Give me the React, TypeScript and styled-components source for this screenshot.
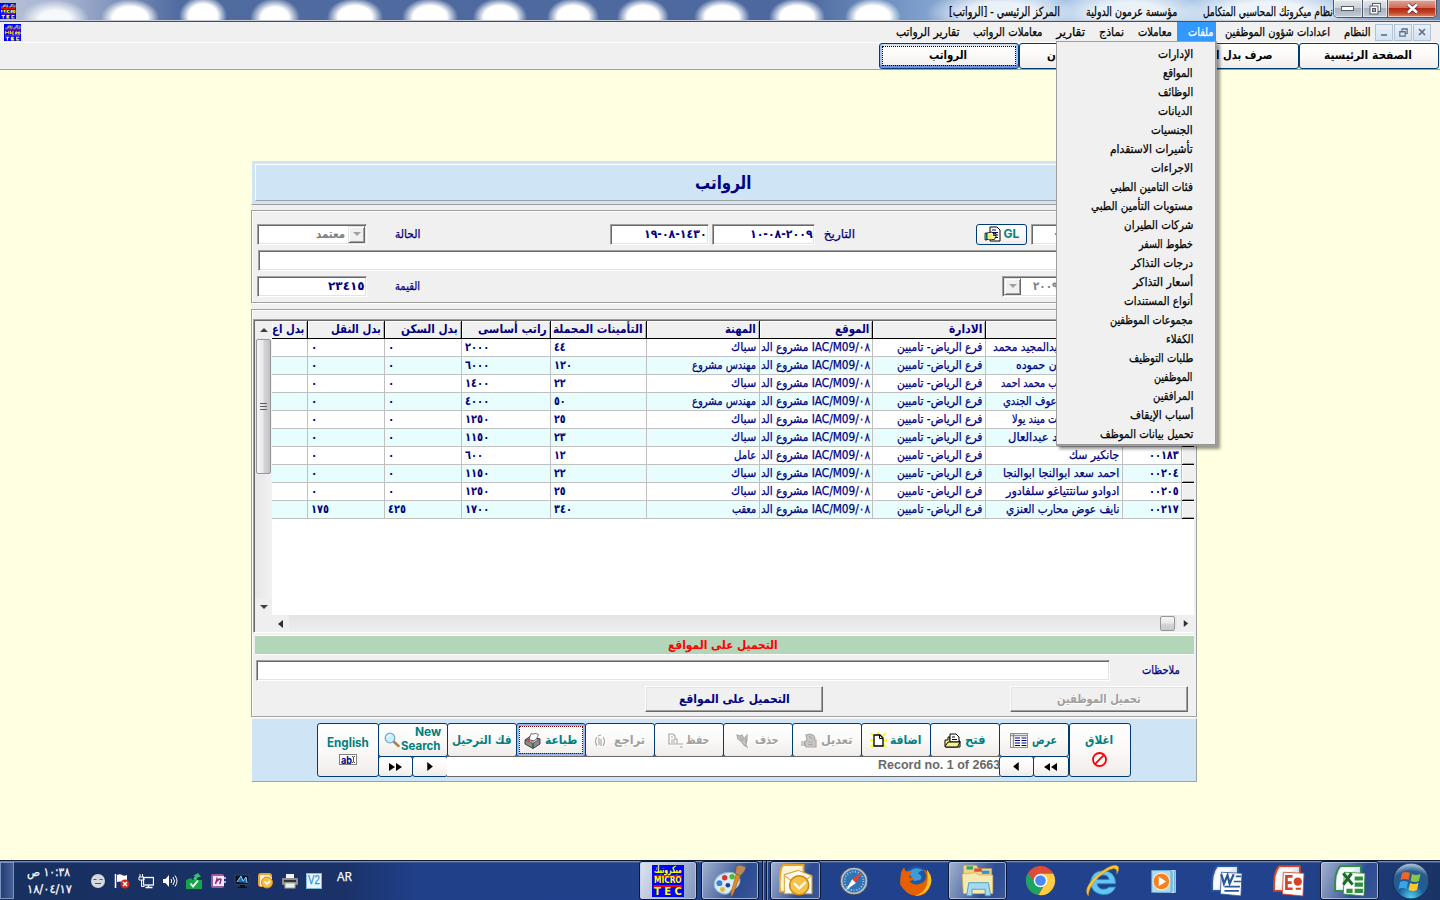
import React, { useLayoutEffect, useRef, useState } from "react";
import styled, { createGlobalStyle, css } from "styled-components";

const NAVY = "#000080";
const TEAL = "#008080";
const FACE = "#f0f0f0";

const Global = createGlobalStyle`
  * { box-sizing: border-box; }
  html, body { margin: 0; padding: 0; }
  body { width: 1440px; height: 900px; overflow: hidden; background: #ffffe1; font-family: "DejaVu Sans", "Liberation Sans", sans-serif; }
`;

/* ---------- text ---------- */

const LabelBox = styled.span<{ $w: number; $rtl: boolean }>`
  display: flex;
  flex: none;
  width: ${(p) => p.$w}px;
  direction: ${(p) => (p.$rtl ? "rtl" : "ltr")};
`;

const LabelInk = styled.span<{ $size: number; $bold?: boolean; $color: string; $rtl: boolean; $emboss?: boolean; $font?: string }>`
  flex: none;
  white-space: nowrap;
  line-height: 1.2;
  transform-origin: ${(p) => (p.$rtl ? "right" : "left")} center;
  font-size: ${(p) => p.$size}px;
  font-weight: ${(p) => (p.$bold ? 700 : 400)};
  color: ${(p) => p.$color};
  ${(p) => !p.$bold && css`-webkit-text-stroke: 0.25px ${p.$color};`}
  ${(p) => p.$font && css`font-family: ${p.$font};`}
  ${(p) => p.$emboss && css`text-shadow: 1px 1px 0 #fff;`}
`;

type LabelProps = {
  w: number;
  size?: number;
  bold?: boolean;
  color?: string;
  ltr?: boolean;
  emboss?: boolean;
  font?: string;
  children: React.ReactNode;
};

/* One line of text condensed or stretched to a fixed measure. */
function Label({ w, size = 12, bold, color = NAVY, ltr, emboss, font, children }: LabelProps) {
  const ref = useRef<HTMLSpanElement>(null);
  const [scale, setScale] = useState(1);
  useLayoutEffect(() => {
    if (ref.current && ref.current.offsetWidth) setScale(w / ref.current.offsetWidth);
  }, [w, children]);
  return (
    <LabelBox $w={w} $rtl={!ltr}>
      <LabelInk ref={ref} $size={size} $bold={bold} $color={color} $rtl={!ltr} $emboss={emboss} $font={font} style={{ transform: `scaleX(${scale})` }}>
        {children}
      </LabelInk>
    </LabelBox>
  );
}

const Visual = styled.bdo.attrs({ dir: "ltr" })``;
const Isolate = styled.bdi.attrs({ dir: "ltr" })``;

/* ---------- title bar ---------- */

const Screen = styled.div`
  width: 1440px;
  height: 900px;
  display: flex;
  flex-direction: column;
  position: relative;
  overflow: hidden;
`;

const TitleBar = styled.header`
  height: 22px;
  flex: none;
  display: flex;
  align-items: flex-start;
  border-bottom: 1px solid #4a4f5c;
  box-shadow: inset 0 -1px 0 #c5cbd6;
  background:
    radial-gradient(ellipse 34px 19px at 55px 19px, #f6f8fa 45%, transparent 100%),
    radial-gradient(ellipse 29px 19px at 130px 18px, #fff 60%, transparent 100%),
    radial-gradient(ellipse 24px 20px at 203px 16px, #fff 60%, transparent 100%),
    radial-gradient(ellipse 25px 20px at 275px 18px, #fff 55%, transparent 100%),
    radial-gradient(ellipse 28px 19px at 355px 17px, #fff 60%, transparent 100%),
    radial-gradient(ellipse 28px 19px at 430px 17px, #fff 60%, transparent 100%),
    radial-gradient(ellipse 27px 19px at 500px 17px, #fff 60%, transparent 100%),
    radial-gradient(ellipse 26px 19px at 573px 17px, #fff 60%, transparent 100%),
    radial-gradient(ellipse 26px 19px at 643px 17px, #fff 60%, transparent 100%),
    radial-gradient(ellipse 28px 19px at 722px 17px, #fff 60%, transparent 100%),
    radial-gradient(ellipse 28px 19px at 797px 17px, #fff 60%, transparent 100%),
    radial-gradient(ellipse 28px 19px at 873px 17px, #fff 60%, transparent 100%),
    radial-gradient(ellipse 75px 24px at 1000px 13px, rgba(255,255,255,.8) 45%, transparent 100%),
    radial-gradient(ellipse 75px 24px at 1130px 13px, rgba(255,255,255,.75) 45%, transparent 100%),
    radial-gradient(ellipse 90px 24px at 1268px 13px, rgba(255,255,255,.8) 45%, transparent 100%),
    linear-gradient(90deg, #b6bfd6 0, #a9b6d3 60px, #506b9f 180px, #4c689e 800px, #7d9fcc 920px, #a9c6e6 1050px, #a9c6e6 1330px, #6b84a8 1440px);
`;

const Brand16 = styled.div<{ $mt: number; $ml: number }>`
  margin: ${(p) => p.$mt}px 0 0 ${(p) => p.$ml}px;
  display: flex;
`;

const TitleTexts = styled.div`
  margin-left: auto;
  height: 22px;
  display: flex;
  align-items: center;
`;

const Space = styled.span<{ $w: number }>`
  flex: none;
  width: ${(p) => p.$w}px;
`;

const Filler = styled.span`
  flex: 1;
`;

const WindowButtons = styled.div`
  display: flex;
  height: 18px;
  width: 104px;
  margin: 0 3px 0 0;
  border: 1px solid #4d5566;
  border-top: 0;
  border-radius: 0 0 5px 5px;
  overflow: hidden;
`;

const WinButton = styled.div<{ $w: number; $close?: boolean }>`
  width: ${(p) => p.$w}px;
  height: 17px;
  display: flex;
  align-items: center;
  justify-content: center;
  border-right: ${(p) => (p.$close ? 0 : 1)}px solid #4d5566;
  box-shadow: inset 0 0 0 1px rgba(255,255,255,.55);
  background: ${(p) => (p.$close
    ? "linear-gradient(#e0a698 0, #cf6d5c 45%, #b5280f 50%, #c2452a 75%, #e38b6c)"
    : "linear-gradient(#e3e6ea 0, #ced4db 45%, #a9b2bd 50%, #c4ccd5)")};
`;

/* ---------- menu bar ---------- */

const MenuBar = styled.nav`
  height: 21px;
  flex: none;
  display: flex;
  align-items: center;
  background: ${FACE};
  border-bottom: 1px solid #fff;
`;

const MenuEntry = styled.div<{ $active?: boolean; $pl: number; $pr: number }>`
  height: 20px;
  display: flex;
  align-items: center;
  padding: 0 ${(p) => p.$pr}px 0 ${(p) => p.$pl}px;
  background: ${(p) => (p.$active ? "#3399ff" : "transparent")};
`;

const MenuEntries = styled.div`
  margin-left: auto;
  display: flex;
`;

const MdiButton = styled.div`
  width: 18px;
  height: 17px;
  margin-right: 1px;
  border: 1px solid #b2c3d6;
  background: linear-gradient(#e9f0f8, #d3e2f2);
  display: flex;
  align-items: center;
  justify-content: center;
`;

const Dropdown = styled.div`
  position: absolute;
  left: 1056px;
  top: 41px;
  width: 161px;
  height: 405px;
  z-index: 5;
  padding: 3px 23px 0 0;
  background: ${FACE};
  border: 1px solid #a0a0a0;
  box-shadow: inset -1px -1px 0 #979797, 3px 3px 3px rgba(0,0,0,.42);
`;

const DropItem = styled.div`
  height: 19px;
  display: flex;
  align-items: center;
  justify-content: flex-end;
`;

/* ---------- tab strip ---------- */

const TabStrip = styled.div`
  height: 27px;
  flex: none;
  display: flex;
  justify-content: flex-end;
  padding-right: 1px;
  background: ${FACE};
  border-bottom: 1px solid #a0a0a0;
`;

const xpButton = css`
  border: 1px solid #003c74;
  border-radius: 3px;
  background: linear-gradient(#ffffff, #fbfaf9 50%, #efebe8);
`;

const Tab = styled.div<{ $active?: boolean; $from?: number }>`
  ${xpButton}
  width: 140px;
  height: 26px;
  display: flex;
  align-items: center;
  justify-content: ${(p) => (p.$from ? "flex-start" : "center")};
  padding: 0 2px 0 ${(p) => p.$from ?? 0}px;
  ${(p) => p.$active && css`
    box-shadow: inset 0 -3px 0 #6f8fe6, inset 2px 0 0 #a9c1f2, inset -2px 0 0 #a9c1f2, inset 0 2px 0 #cfe0fb;
    outline: 1px dotted #000;
    outline-offset: -4px;
  `}
`;

/* ---------- form ---------- */

const Workspace = styled.main`
  flex: 1;
  padding: 91px 0 0 251px;
  background: #ffffe1;
`;

const Form = styled.section`
  width: 946px;
  display: flex;
  flex-direction: column;
`;

const FormHeader = styled.div`
  height: 44px;
  padding: 3px 3px 2px 3px;
  background: #cfe4f5;
  border-bottom: 1px solid #a0a0a0;
  border-left: 1px solid #ffffe1;
`;

const FormTitle = styled.div`
  height: 37px;
  display: flex;
  align-items: center;
  justify-content: center;
  padding-right: 2px;
  border: 1px solid #fff;
  border-right-color: #a0a0a0;
  border-bottom-color: #a0a0a0;
`;

const FormBody = styled.div`
  height: 513px;
  padding-top: 5px;
  background: ${FACE};
`;

const Panel = styled.div<{ $h: number }>`
  height: ${(p) => p.$h}px;
  margin-bottom: 6px;
  border: 1px solid #a0a0a0;
  box-shadow: inset 1px 1px 0 #fff, 0 1px 0 #fff;
`;

const FieldRow = styled.div<{ $pt: number }>`
  display: flex;
  align-items: center;
  height: ${(p) => 22 + p.$pt}px;
  padding: ${(p) => p.$pt}px 0 0 5px;
`;

const Field = styled.div<{ $w: number; $pl?: boolean }>`
  width: ${(p) => p.$w}px;
  height: 21px;
  flex: none;
  display: flex;
  align-items: center;
  justify-content: ${(p) => (p.$pl ? "flex-start" : "flex-end")};
  padding: 0 1px;
  background: #fff;
  border: 1px solid;
  border-color: #a0a0a0 #fff #fff #a0a0a0;
  box-shadow: inset 1px 1px 0 #696969, inset -1px -1px 0 #e3e3e3;
`;

const ComboArrow = styled.div`
  width: 17px;
  height: 17px;
  flex: none;
  display: flex;
  align-items: center;
  justify-content: center;
  background: ${FACE};
  border: 1px solid;
  border-color: #e3e3e3 #696969 #696969 #e3e3e3;
  box-shadow: inset 1px 1px 0 #fff, inset -1px -1px 0 #a0a0a0;
`;

const GlButton = styled.div`
  ${xpButton}
  width: 51px;
  height: 21px;
  display: flex;
  align-items: center;
  justify-content: center;
  gap: 3px;
`;

/* ---------- grid ---------- */

const ListBox = styled.div`
  height: 314px;
  margin: 9px 2px 0 1px;
  display: flex;
  background: #fff;
  border: 1px solid #a0a0a0;
  border-right: 0;
  border-bottom: 1px solid #fff;
  box-shadow: inset 1px 1px 0 #696969;
  padding: 1px 0 0 1px;
`;

const VScroll = styled.div`
  width: 17px;
  display: flex;
  flex-direction: column;
  align-items: center;
  background: linear-gradient(90deg, #e6e6e6, #f2f2f2);
`;

const VThumb = styled.div`
  width: 15px;
  height: 135px;
  margin-top: 1px;
  display: flex;
  align-items: center;
  justify-content: center;
  border: 1px solid #979797;
  border-radius: 2px;
  background: linear-gradient(90deg, #f5f5f5, #e8e8eb 48%, #d6d6da 52%, #c0c0c6);
`;

const ScrollEnd = styled.div`
  width: 17px;
  height: 17px;
  flex: none;
  display: flex;
  align-items: center;
  justify-content: center;
  background: #efefef;
`;

const GridSide = styled.div`
  width: 923px;
  display: flex;
  flex-direction: column;
`;

const GridArea = styled.div`
  flex: 1;
  background: #fff;
`;

const columns = "36px 77px 77px 89px 96px 113px 113px 113px 137px 59px 12px";

const HeadRow = styled.div`
  display: grid;
  grid-template-columns: ${columns};
  height: 18px;
  background: ${FACE};
  border-bottom: 1px solid #000;
`;

const HeadCell = styled.div`
  display: flex;
  align-items: center;
  justify-content: flex-end;
  overflow: hidden;
  padding-right: 3px;
  border-right: 1px solid #000;
  box-shadow: inset 1px 1px 0 #fff, inset -1px 0 0 #b5b5b5;
`;

const DataRow = styled.div<{ $alt: boolean }>`
  display: grid;
  grid-template-columns: ${columns};
  height: 18px;
  background: ${(p) => (p.$alt ? "#e8fefe" : "#fff")};
`;

const Cell = styled.div<{ $num?: boolean; $pr?: number }>`
  display: flex;
  align-items: center;
  justify-content: ${(p) => (p.$num ? "flex-start" : "flex-end")};
  overflow: hidden;
  padding: 0 ${(p) => p.$pr ?? 2}px 0 ${(p) => (p.$num ? 3 : 0)}px;
  border-right: 1px solid #c0c0c0;
  border-bottom: 1px solid #c0c0c0;
`;

const Selector = styled.div`
  background: ${FACE};
  border-bottom: 1px solid #000;
  box-shadow: inset 1px 1px 0 #fff, inset 0 -1px 0 #a0a0a0;
`;

const HScroll = styled.div`
  height: 17px;
  display: flex;
  align-items: center;
  background: linear-gradient(#e4e4e4, #eeeeee);
`;

const HThumb = styled.div`
  width: 15px;
  height: 15px;
  margin: 0 2px 0 auto;
  border: 1px solid #979797;
  border-radius: 2px;
  background: linear-gradient(#f5f5f5, #e9e9ea 48%, #d6d6da 52%, #cacace);
`;

const GreenStrip = styled.div`
  height: 20px;
  margin: 2px 2px 0 3px;
  padding-right: 3px;
  border-top: 1px solid #fff;
  border-bottom: 1px solid #fff;
  background: #b3d5b8;
  display: flex;
  align-items: center;
  justify-content: center;
`;

const RemarksRow = styled.div`
  height: 31px;
  display: flex;
  align-items: center;
  padding: 0 0 1px 4px;
`;

const ActionRow = styled.div`
  height: 26px;
  display: flex;
  justify-content: flex-end;
  gap: 187px;
  padding-right: 8px;
`;

const RaisedButton = styled.div`
  width: 178px;
  height: 26px;
  display: flex;
  align-items: center;
  justify-content: center;
  background: ${FACE};
  border: 1px solid;
  border-color: #fff #696969 #696969 #fff;
  box-shadow: inset -1px -1px 0 #a0a0a0, inset 1px 1px 0 #e3e3e3;
`;

/* ---------- footer tool bar ---------- */

const Footer = styled.footer`
  height: 64px;
  display: flex;
  padding: 4px 0 0 65px;
  margin-left: 1px;
  background: #cfe4f5;
  border-top: 1px solid ${FACE};
  border-right: 1px solid #a0a0a0;
  border-bottom: 1px solid #a0a0a0;
`;

const ToolMid = styled.div`
  width: 691px;
  margin-left: -1px;
  display: flex;
  flex-direction: column;
`;

const ToolLine = styled.div`
  display: flex;
  & + & { margin-top: -1px; }
  & > * + * { margin-left: -1px; }
`;

const ToolButton = styled.div<{ $w: number; $h: number; $column?: boolean; $focus?: boolean; $gap?: number }>`
  ${xpButton}
  width: ${(p) => p.$w}px;
  height: ${(p) => p.$h}px;
  flex: none;
  display: flex;
  flex-direction: ${(p) => (p.$column ? "column" : "row")};
  align-items: center;
  justify-content: center;
  gap: ${(p) => p.$gap ?? 4}px;
  padding-right: 1px;
  ${(p) => p.$focus && css`
    box-shadow: inset 0 0 0 2px #9db6ee, inset 0 -3px 0 #6f8fe6;
    outline: 1px dotted #800000;
    outline-offset: -4px;
  `}
`;

const TwoLines = styled.div`
  display: flex;
  flex-direction: column;
  align-items: flex-end;
`;

const RecordBox = styled.div`
  flex: 1;
  height: 21px;
  display: flex;
  align-items: flex-start;
  justify-content: flex-end;
  padding-top: 1px;
  background: #fff;
  border-top: 1px solid #696969;
  border-bottom: 1px solid #696969;
`;

/* ---------- task bar ---------- */

const Taskbar = styled.div`
  height: 40px;
  flex: none;
  display: flex;
  align-items: stretch;
  border-top: 1px solid #101b35;
  box-shadow: inset 0 1px 0 #7488b4, inset 0 2px 0 #3d5690;
  background: linear-gradient(90deg, #17305f 0, #1a3268 24%, #20408a 29%, #21428c 90%, #1a3366 100%);
`;

const ShowDesktop = styled.div`
  width: 14px;
  margin: 1px 0 1px 0;
  border: 1px solid #7e94c0;
  background: linear-gradient(90deg, #223c73, #486197);
`;

const Clock = styled.div`
  width: 60px;
  margin: 5px 0 0 13px;
  display: flex;
  flex-direction: column;
  gap: 3px;
`;

const Tray = styled.div`
  display: flex;
  align-items: center;
  width: 242px;
  gap: 8px;
  padding-left: 3px;
`;

const LanguageTag = styled.div`
  padding: 9px 0 0 8px;
  width: 310px;
`;

const TaskCell = styled.div<{ $w: number; $frame?: boolean; $lit?: boolean; $mr?: number }>`
  width: ${(p) => p.$w}px;
  height: 39px;
  margin-right: ${(p) => p.$mr ?? 0}px;
  flex: none;
  display: flex;
  align-items: center;
  justify-content: center;
  ${(p) => p.$frame && css`
    border: 1px solid #0c1834;
    border-radius: 3px;
    box-shadow: inset 0 0 0 1px rgba(190, 205, 235, .75);
    background: ${p.$lit
      ? "linear-gradient(115deg, #dfe4ee 0, #b4c0d8 45%, #8095c0 100%)"
      : "linear-gradient(115deg, #a3b2d1 0, #6078ab 40%, #2c4b91 65%, #3a5798 100%)"};
  `}
`;

const StackEdge = styled.div`
  width: 4px;
  height: 39px;
  border-left: 1px solid #0c1834;
  box-shadow: inset 1px 0 0 #7d92c0;
`;

/* ---------- drawings ---------- */

const BrandIcon = ({ s }: { s: number }) => (
  <svg width={s} height={s} viewBox="0 0 32 32">
    <rect width="32" height="32" fill="#0000ff" />
    <path d="M2 8h5V4M9 8V4h3v4h3V3M17 8h4V5M23 8V3h3v5h4V3" stroke="#a8a870" strokeWidth="2.200" fill="none" />
    <rect x="2" y="10" width="28" height="2" fill="#f00" />
    <path d="M3 19v-5l3 3 3-3v5M12 13v6M19 15h-4v4h4M22 20v-5h3v2h-3l3 3M27 15h3v4h-3z" stroke="#ffff00" strokeWidth="1.800" fill="none" />
    <rect x="2" y="20.500" width="28" height="2" fill="#f00" />
    <path d="M3 25h7M6.500 25v6M19 25h-5v5h5M14 27.500h4M29 25h-5v5h5" stroke="#ffff00" strokeWidth="2.200" fill="none" />
  </svg>
);

const BigBrand = styled.div`
  width: 32px;
  height: 32px;
  display: flex;
  flex-direction: column;
  align-items: center;
  justify-content: space-between;
  background: #0000ff;
  overflow: hidden;
`;

const BrandWord = styled.div<{ $lines?: boolean }>`
  height: ${(p) => (p.$lines ? 12 : 10)}px;
  display: flex;
  align-items: center;
  ${(p) => p.$lines && css`
    border-top: 2px solid #f00;
    border-bottom: 2px solid #f00;
  `}
`;

const Triangle = ({ dir, c = "#000", s = 8 }: { dir: "l" | "r" | "u" | "d"; c?: string; s?: number }) => {
  const d = { l: "M6 0v8L1 4z", r: "M2 0v8l5-4z", u: "M0 6h8L4 2z", d: "M0 2h8L4 6z" }[dir];
  return (
    <svg width={s} height={s} viewBox="0 0 8 8">
      <path d={d} fill={c} />
    </svg>
  );
};

const Double = ({ dir }: { dir: "l" | "r" }) => (
  <svg width="13" height="8" viewBox="0 0 13 8">
    <path d={dir === "r" ? "M0 0v8l6-4zM7 0v8l6-4z" : "M6 0v8L0 4zM13 0v8L7 4z"} fill="#000" />
  </svg>
);

const LedgerIcon = () => (
  <svg width="17" height="17" viewBox="0 0 17 17">
    <path d="M6 1h7l3 3v11H6z" fill="#fff" stroke="#000" />
    <path d="M8 4h4M8 6.500h6M8 9h6M8 11.500h6" stroke="#000080" />
    <path d="M1 7h2v7H1z" fill="#0ff" stroke="#000" strokeWidth=".7" />
    <path d="M3 7l5-1 1 1.500h3v1.500H9l3 .5v1.500l-1 .5v1.500l-1 .5H3z" fill="#ffffc0" stroke="#000" strokeWidth=".8" />
    <path d="M4 9h4M4 11h5M4 13h4" stroke="#e0d000" strokeWidth=".8" />
  </svg>
);

const MagnifierIcon = () => (
  <svg width="16" height="16" viewBox="0 0 16 16">
    <path d="M9 9l5.500 5" stroke="#b97a45" strokeWidth="2.500" strokeLinecap="round" />
    <circle cx="6" cy="6" r="4.800" fill="#c8f0fb" stroke="#74a9d2" strokeWidth="1.300" />
    <path d="M3.500 5.500C4 4 5 3.200 6.500 3.200" stroke="#fff" strokeWidth="1.200" fill="none" />
  </svg>
);

const PrinterIcon = () => (
  <svg width="17" height="17" viewBox="0 0 17 17">
    <path d="M1 8l5-3.500 10 2.500v5l-7 4.500-8-4.500z" fill="#8c8c8c" stroke="#333" strokeWidth=".9" />
    <path d="M5 8l2-6.500 2 .8 2-1 3.500 1.200-3 7z" fill="#fff" stroke="#555" strokeWidth=".8" />
    <path d="M1 8l8 3.500 7-4.500-4 0-2 2-5-1.500z" fill="#c4c4c4" stroke="#333" strokeWidth=".6" />
    <path d="M9 11.500V16" stroke="#333" />
    <path d="M4 8.300l2 .8" stroke="#f33" strokeWidth="1.300" />
    <path d="M7 9.500l1.500.5" stroke="#0d0" strokeWidth="1.500" />
  </svg>
);

const ViewIcon = () => (
  <svg width="18" height="15" viewBox="0 0 18 15">
    <rect x=".5" y=".5" width="17" height="14" fill="#fff" stroke="#909090" />
    <path d="M1 2.500h16M3.500 1v13" stroke="#909090" strokeWidth="1.500" />
    <path d="M5 5h5M5 7.500h5M5 10h5M5 12.500h5M11.500 5h5M11.500 7.500h5M11.500 10h5M11.500 12.500h5" stroke="#000080" strokeWidth="1.200" />
  </svg>
);

const OpenIcon = () => (
  <svg width="17" height="15" viewBox="0 0 17 15">
    <path d="M1 13V7h3V4h2v4h10v6H2z" fill="#ffff99" stroke="#000" />
    <path d="M6 9V1h6l3 3v5z" fill="#fff" stroke="#000" />
    <path d="M8 4h3M8 6.500h5" stroke="#000" />
    <path d="M1 13.500l3-4.500h12l-2.500 5H1z" fill="#f6f08a" stroke="#000" />
  </svg>
);

const NewIcon = () => (
  <svg width="17" height="16" viewBox="0 0 17 16">
    <path d="M1 1l15 14M16 1L1 15M8 0v4M0 8h17" stroke="#ffff00" strokeWidth="1.800" />
    <path d="M4 3h6l3 3v8H4z" fill="#fff" stroke="#000" strokeWidth="1.300" />
    <path d="M9.500 3v3.500H13" fill="none" stroke="#000" />
  </svg>
);

const GhostIcon = ({ kind }: { kind: "edit" | "erase" | "save" | "undo" }) => {
  const shapes = {
    edit: "M5 2l3-1 4 1 2 3-1 2h2v7H5l-1-2V9l2-2zM1 8v5M3 8v5M7 9h5M7 11.500h5M8 3l3 3",
    erase: "M1 2l3 1 2-1 2 4 3-4v5l-1 5 1 2-3-2-3-4-3-2zM4 4l3 4M9 9l2-4",
    save: "M1 1h4l2 2v3h2v5H1zM3 4h2M3 7h4M3 9h4M10 11h5M12 14h3",
    undo: "M3 4Q0 8 3 13M5 5v7M7 6v7M9 4Q12 8 9 13M4 3l3-1",
  };
  return (
    <svg width="16" height="15" viewBox="0 0 16 15">
      <path d={shapes[kind]} transform="translate(1 1)" stroke="#fff" fill="none" strokeWidth="1.200" />
      <path d={shapes[kind]} stroke="#a8a8a8" fill={kind === "undo" || kind === "save" ? "none" : "#c8c8c8"} strokeWidth="1.200" />
    </svg>
  );
};

const StopIcon = () => (
  <svg width="15" height="15" viewBox="0 0 15 15">
    <circle cx="7.500" cy="7.500" r="6.500" fill="#fff" stroke="#f00" strokeWidth="1.800" />
    <path d="M3.200 11.800l8.600-8.600" stroke="#f00" strokeWidth="1.800" />
  </svg>
);

const TextEntry = styled.div`
  width: 18px;
  height: 11px;
  display: flex;
  align-items: center;
  justify-content: space-between;
  padding: 0 1px;
  background: #fff;
  border: 1px solid #808080;
`;

const Caret = () => (
  <svg width="4" height="9" viewBox="0 0 4 9">
    <path d="M0 .5h1.500M2.500 .5H4M2 1v7M0 8.500h1.500M2.500 8.500H4" stroke="#000" strokeWidth=".9" />
  </svg>
);

/* tray */
const TrayGlyph = styled.svg.attrs({ width: 16, height: 16, viewBox: "0 0 16 16" })`
  flex: none;
`;

const trayIcons = [
  <><circle cx="8" cy="8" r="7" fill="#d5d8de" /><path d="M3.500 6.500h3M9.500 6.500h3M5 10.500h6" stroke="#555" /></>,
  <><path d="M1.500 1v14" stroke="#fff" strokeWidth="1.500" /><path d="M3 2q3-1.500 5 0t5 0v7q-3 1-5 0t-5 0z" fill="#fff" /><circle cx="11" cy="11" r="4.500" fill="#d5281c" /><path d="M9 9l4 4M13 9l-4 4" stroke="#fff" strokeWidth="1.500" /></>,
  <><rect x="5.500" y="4.500" width="10" height="7.500" fill="#1a3268" stroke="#fff" strokeWidth="1.300" /><path d="M10.500 12v2.500M7.500 14.500h7" stroke="#fff" strokeWidth="1.300" /><path d="M2 1v3M4.500 1v3M1 4h5v3H1zM3.500 7v6.500h3" stroke="#fff" fill="none" /></>,
  <><path d="M1 6h2.500L7 2v12L3.500 10H1z" fill="#fff" /><path d="M9 6q1.500 2 0 4M11 4q3 4 0 8M13 2.500q4 5.500 0 11" stroke="#fff" fill="none" /></>,
  <><path d="M0 7l5-2 2 2h9v9H0z" fill="#18a34a" /><path d="M7 6l2-3H7l5-3 3 4h-3l-2 4z" fill="#35c56a" /><path d="M4.500 10.500l2.500 3 5-6" stroke="#fff" strokeWidth="1.800" fill="none" /></>,
  <><rect x="1" y="1" width="13" height="14" rx="2" fill="#a05aa5" /><rect x="3" y="3" width="11" height="10" fill="#f6e8f7" /><path d="M5.500 11l1.500-5 .5 1.500Q10 5 11 6.500L9.800 11" stroke="#7c2a82" strokeWidth="1.500" fill="none" /><path d="M14 4h2v2h-2M14 8h2v2h-2" fill="#c9a0cc" /></>,
  <><rect x="1" y="2" width="14" height="9.500" fill="#0a1120" stroke="#38445c" /><path d="M3 9l4-6 2 5 3-4 1 6" stroke="#8fd0ff" fill="#1c6bb0" /><path d="M6 12v2H4v1h9v-1h-2v-2z" fill="#111" /></>,
  <><rect x="0" y="0" width="14" height="14" rx="3" fill="#f0a22e" /><path d="M2 2h9l3 3v8H2z" fill="#fff3d0" /><circle cx="9" cy="9.500" r="5.500" fill="#f3c050" stroke="#d98a12" /><path d="M6.500 8.500l2.500 2.500 3-3" stroke="#fff" strokeWidth="1.600" fill="none" /></>,
  <><rect x="4" y="1" width="8" height="5" fill="#f4f4f4" /><rect x="0" y="5" width="16" height="7" rx="1" fill="#8d9093" /><rect x="2" y="7" width="12" height="2" fill="#333" /><rect x="3" y="10" width="10" height="5" fill="#e9f1e7" stroke="#9a9" /></>,
];

const VBadge = styled.div`
  width: 16px;
  height: 16px;
  flex: none;
  display: flex;
  align-items: center;
  justify-content: center;
  background: #e9f5fb;
  border: 1px solid #7dbbe0;
`;

/* task bar applications */
const App32 = ({ children, s = 34 }: { children: React.ReactNode; s?: number }) => (
  <svg width={s} height={s} viewBox="0 0 32 32">{children}</svg>
);

const Paint = () => (
  <App32>
    <path d="M1 20C1 12 9 7 17 8s10 7 7 12-6 2-8 6-13 3-15-6z" fill="#d8ecf7" stroke="#8fb3ca" />
    <circle cx="6" cy="18" r="2.800" fill="#3b7edb" /><circle cx="11" cy="13" r="2.600" fill="#d13b2c" /><circle cx="18" cy="12" r="2.600" fill="#58b33b" /><circle cx="9" cy="24" r="2.300" fill="#e9b429" /><circle cx="14" cy="20" r="2.200" fill="#20408a" />
    <path d="M26 10L19 28l-2 3v-4l5-18z" fill="#e08a2c" stroke="#a65d14" strokeWidth=".6" />
    <path d="M21 9l1-7 4-1 5 2-1 3-4 5z" fill="#b98a5c" stroke="#7a5228" strokeWidth=".6" />
  </App32>
);
const Outlook = () => (
  <App32>
    <path d="M4 1h19v25H1q-1-12 1-22z" fill="#fff4d6" stroke="#eaa422" strokeWidth="1.800" />
    <path d="M5 10l13-4 13 5v17H5z" fill="#fffaf0" stroke="#d8a548" />
    <path d="M5 11l13 9 13-9" fill="none" stroke="#d8a548" />
    <circle cx="19" cy="20" r="9" fill="#f7c14a" stroke="#c98a14" strokeWidth="1.500" />
    <path d="M14 18l5 5 6-6" fill="none" stroke="#fffbe6" strokeWidth="2.200" />
  </App32>
);
const Safari = () => (
  <App32 s={30}>
    <circle cx="16" cy="16" r="13.500" fill="#2f74b4" stroke="#b8bec5" strokeWidth="2.600" />
    <circle cx="16" cy="16" r="14.800" fill="none" stroke="#3c434b" />
    <circle cx="16" cy="16" r="10" fill="none" stroke="#a9d6f4" strokeDasharray="1 2" strokeWidth="2" />
    <path d="M25 6l-7 12-4-4z" fill="#e8402e" /><path d="M7 26l7-12 4 4z" fill="#fff" />
  </App32>
);
const Firefox = () => (
  <App32>
    <circle cx="16" cy="15" r="13" fill="#20559f" />
    <path d="M9 8q6-7 14-2-4 0-5 3 5 2 2 6l-6 1z" fill="#3f9bd8" />
    <path d="M2 8q1-3 3-5 0 3 2 4 4-1 5 1-3 2-2 5 2 0 4 0-1 3-4 3 3 4 8 3 7-1 8-8-1-3-3-6 9 5 7 14-3 11-13 11T1 19q0-6 1-11z" fill="#e66000" />
    <path d="M26 5q7 8 3 16-4 9-14 9 9-3 11-10 2-8 0-15z" fill="#ffbf2b" />
  </App32>
);
const Explorer = () => (
  <App32 s={35}>
    <path d="M3 5V2h12l2 3h12v18H3z" fill="#efd58a" stroke="#b99742" strokeWidth=".6" />
    <path d="M6 3h6v3H6z" fill="#3aa657" /><path d="M13 5h7v3h-7z" fill="#e04b3b" /><path d="M20 7h7v3h-7z" fill="#3a8fd8" />
    <path d="M2 10l12-1 3 2h13v17H3z" fill="#f8e9b0" stroke="#c8a850" strokeWidth=".6" />
    <path d="M6 30l2-12h18l2 12h-5v-6H11v6z" fill="#a5daf0" stroke="#4798c4" strokeWidth=".8" />
  </App32>
);
const Chrome = () => (
  <App32 s={31}>
    <circle cx="16" cy="16" r="15" fill="#dd4b39" />
    <path d="M3 8.500A15 15 0 0014 31l6-11.500H12z" fill="#1da362" />
    <path d="M16 9h13.200A15 15 0 0114 31l7-12z" fill="#ffcd46" />
    <circle cx="16" cy="16" r="7" fill="#fff" /><circle cx="16" cy="16" r="5.500" fill="#4a8af4" />
  </App32>
);
const Ie = () => (
  <App32 s={35}>
    <path d="M28 19H11q1 5 6 5 3 0 5-2h6q-3 7-11 7Q6 28 5 18 6 7 17 7q11 1 11 12zM11 15h11q-1-4-5-4t-6 4z" fill="#64c4f2" stroke="#2a86c6" strokeWidth=".8" fillRule="evenodd" />
    <path d="M3 30Q-2 24 9 13 21 2 28 2q5 1 1 8 1-5-3-5-6 1-15 9Q3 23 3 30z" fill="#fbc62f" stroke="#d99a12" strokeWidth=".5" />
  </App32>
);
const Wmp = () => (
  <App32 s={28}>
    <path d="M12 4h17v25H12z" fill="#5fa9d6" stroke="#bfe2f5" /><path d="M8 4h19v25H8z" fill="#86c3e6" stroke="#cfeaf8" />
    <rect x="2" y="4" width="22" height="25" fill="#b5daee" stroke="#6aa7cb" />
    <circle cx="13" cy="16.500" r="9.500" fill="#f58220" stroke="#fff" /><path d="M10 11l8.500 5.500L10 22z" fill="#fff" />
  </App32>
);
const Office = ({ c, kind }: { c: string; kind: "w" | "p" | "x" }) => (
  <App32 s={33}>
    <path d="M7 2h20v24H2Q1 8 7 2z" fill="#dfe7f2" stroke={c} strokeWidth="1.800" />
    <path d="M4 24Q3 8 9 4h14Q12 10 8 24z" fill="#fff" opacity=".8" />
    <path d="M11 8l20 1-1 22-20-2z" fill="#fff" stroke={c} strokeWidth=".8" />
    {kind === "w" && <><path d="M11 10l2.500 9 3.500-8 2 8 4-9" fill="none" stroke={c} strokeWidth="2.200" /><path d="M25 12h5M23 17h7M14 22h15M14 26h14" stroke={c} strokeWidth="1.600" /></>}
    {kind === "p" && <><path d="M20 12h-6v12h6M14 18h5" fill="none" stroke={c} strokeWidth="2.600" /><circle cx="25" cy="17" r="4" fill={c} /><path d="M23 24h5" stroke={c} strokeWidth="2" /></>}
    {kind === "x" && <><path d="M10 9l9 11M18 9l-8 11" stroke="#1d6b2c" strokeWidth="3" /><path d="M21 12h8v4h-8zM21 18h8v4h-8zM13 24h6v4h-6zM21 24h8v4h-8z" fill={c} /></>}
  </App32>
);
const Start = () => (
  <svg width="38" height="38" viewBox="0 0 38 38">
    <defs>
      <radialGradient id="orb" cx=".5" cy=".95" r=".9">
        <stop offset="0" stopColor="#4fd0f5" /><stop offset=".4" stopColor="#1c5f98" /><stop offset=".8" stopColor="#2b5a8c" /><stop offset="1" stopColor="#9dbbd4" />
      </radialGradient>
    </defs>
    <circle cx="19" cy="19" r="18" fill="url(#orb)" stroke="#16304f" />
    <path d="M10 11q4-2 8 0l-1.500 7q-4-2-8 0z" fill="#f0642a" />
    <path d="M20 12q4 2 8.500 0L27 19q-4 2-8.500 0z" fill="#8cc63e" />
    <path d="M8 20q4-2 8 0l-1.500 7q-4-2-8 0z" fill="#35a6e6" />
    <path d="M18 21q4 2 8.500 0L25 28q-4 2-8.500 0z" fill="#fcc72c" />
  </svg>
);

/* ---------- data ---------- */

const dropItems: [string, number][] = [
  ["الإدارات", 35], ["المواقع", 30], ["الوظائف", 35], ["الديانات", 35], ["الجنسيات", 42],
  ["تأشيرات الاستقدام", 83], ["الاجراءات", 42], ["فئات التامين الطبي", 83], ["مستويات التأمين الطبي", 102],
  ["شركات الطيران", 69], ["خطوط السفر", 54], ["درجات التذاكر", 62], ["أسعار التذاكر", 60],
  ["أنواع المستندات", 69], ["مجموعات الموظفين", 83], ["الكفلاء", 28], ["طلبات التوظيف", 64],
  ["الموظفين", 39], ["المرافقين", 40], ["أسباب الإيقاف", 63], ["تحميل بيانات الموظف", 93],
];

const heads: [string, number][] = [
  ["بدل اع", 32], ["بدل النقل", 50], ["بدل السكن", 57], ["راتب أساسى", 69], ["التأمينات المحملة", 90],
  ["المهنة", 31], ["الموقع", 34], ["الادارة", 33],
];

type Row = { transport: string; housing: string; basic: string; ins: string; job: [string, number]; name: [string, number, number]; id: string };
const plumber: [string, number] = ["سباك", 25];
const engineer: [string, number] = ["مهندس مشروع", 64];
const rows: Row[] = [
  { transport: "٠", housing: "٠", basic: "٢٠٠٠", ins: "٤٤", job: plumber, name: ["بدالمجيد محمد", 64, 65], id: "" },
  { transport: "٠", housing: "٠", basic: "٦٠٠٠", ins: "١٢٠", job: engineer, name: ["ن حموده", 41, 65], id: "" },
  { transport: "٠", housing: "٠", basic: "١٤٠٠", ins: "٢٢", job: plumber, name: ["ب محمد احمد", 56, 65], id: "" },
  { transport: "٠", housing: "٠", basic: "٤٠٠٠", ins: "٥٠", job: engineer, name: ["عوف الجندي", 54, 65], id: "" },
  { transport: "٠", housing: "٠", basic: "١٢٥٠", ins: "٢٥", job: plumber, name: ["ت ميند يولا", 45, 65], id: "" },
  { transport: "٠", housing: "٠", basic: "١١٥٠", ins: "٢٣", job: plumber, name: ["د عبدالعال", 49, 65], id: "" },
  { transport: "٠", housing: "٠", basic: "٦٠٠", ins: "١٢", job: ["عامل", 22], name: ["جانكير سك", 50, 3], id: "٠٠١٨٣" },
  { transport: "٠", housing: "٠", basic: "١١٥٠", ins: "٢٢", job: plumber, name: ["احمد سعد ابوالنجا ابوالنجا", 116, 3], id: "٠٠٢٠٤" },
  { transport: "٠", housing: "٠", basic: "١٢٥٠", ins: "٢٥", job: plumber, name: ["ادوادو سانتتياغو سلفادور", 113, 3], id: "٠٠٢٠٥" },
  { transport: "١٧٥", housing: "٤٢٥", basic: "١٧٠٠", ins: "٣٤٠", job: ["معقب", 24], name: ["نايف عوض محارب العنزي", 113, 3], id: "٠٠٢١٧" },
];

const NumCell = ({ v }: { v: string }) => (
  <Cell $num>
    <Label w={v.length * 6} bold ltr>{v}</Label>
  </Cell>
);

const tools: { text: string; w: number; icon: React.ReactNode; off?: boolean; focus?: boolean; gap?: number }[] = [
  { text: "طباعة", w: 32, icon: <PrinterIcon />, focus: true },
  { text: "تراجع", w: 31, icon: <GhostIcon kind="undo" />, off: true },
  { text: "حفظ", w: 23, icon: <GhostIcon kind="save" />, off: true, gap: 3 },
  { text: "حذف", w: 24, icon: <GhostIcon kind="erase" />, off: true, gap: 3 },
  { text: "تعديل", w: 31, icon: <GhostIcon kind="edit" />, off: true },
  { text: "اضافة", w: 31, icon: <NewIcon /> },
  { text: "فتح", w: 20, icon: <OpenIcon /> },
  { text: "عرض", w: 25, icon: <ViewIcon /> },
];

export default function App() {
  return (
    <Screen>
      <Global />
      <TitleBar>
        <Brand16 $mt={3} $ml={0}><BrandIcon s={16} /></Brand16>
        <TitleTexts>
          <Label w={111} size={12.500} color="#000">المركز الرئيسي - [الرواتب]</Label>
          <Space $w={26} />
          <Label w={91} size={12.500} color="#000">مؤسسة عرمون الدولية</Label>
          <Space $w={26} />
          <Label w={130} size={12.500} color="#000">نظام ميكروتك المحاسبي المتكامل</Label>
        </TitleTexts>
        <WindowButtons>
          <WinButton $w={29}>
            <svg width="13" height="5" viewBox="0 0 13 5"><rect x=".5" y=".5" width="12" height="4" fill="#fff" stroke="#555c6b" /></svg>
          </WinButton>
          <WinButton $w={26}>
            <svg width="13" height="12" viewBox="0 0 13 12"><rect x="3.500" y=".5" width="8" height="8" fill="#fff" stroke="#555c6b" /><rect x="1" y="3" width="8" height="8" fill="#fff" stroke="#555c6b" /><rect x="3.500" y="5.500" width="3" height="3" fill="#aab" stroke="#555c6b" /></svg>
          </WinButton>
          <WinButton $w={48} $close>
            <svg width="13" height="11" viewBox="0 0 13 11"><path d="M2 1.500l9 8M11 1.500l-9 8" stroke="#53363a" strokeWidth="4" /><path d="M2 1.500l9 8M11 1.500l-9 8" stroke="#fff" strokeWidth="2.500" /></svg>
          </WinButton>
        </WindowButtons>
      </TitleBar>

      <MenuBar>
        <Brand16 $mt={0} $ml={4}><BrandIcon s={17} /></Brand16>
        <MenuEntries>
          <MenuEntry $pl={0} $pr={7}><Label w={64} color="#000">تقارير الرواتب</Label></MenuEntry>
          <MenuEntry $pl={7} $pr={7}><Label w={69} color="#000">معاملات الرواتب</Label></MenuEntry>
          <MenuEntry $pl={7} $pr={7}><Label w={29} color="#000">تقارير</Label></MenuEntry>
          <MenuEntry $pl={7} $pr={7}><Label w={25} color="#000">نماذج</Label></MenuEntry>
          <MenuEntry $pl={7} $pr={5}><Label w={34} color="#000">معاملات</Label></MenuEntry>
          <MenuEntry $pl={11} $pr={3} $active><Label w={25} color="#fff">ملفات</Label></MenuEntry>
          <MenuEntry $pl={9} $pr={7}><Label w={105} color="#000">اعدادات شؤون الموظفين</Label></MenuEntry>
          <MenuEntry $pl={7} $pr={4}><Label w={27} color="#000">النظام</Label></MenuEntry>
        </MenuEntries>
        <MdiButton><svg width="8" height="8" viewBox="0 0 8 8"><path d="M1 7h6" stroke="#5b6f8a" strokeWidth="1.600" /></svg></MdiButton>
        <MdiButton><svg width="9" height="9" viewBox="0 0 9 9"><path d="M3 3V.8h5.200V5.500H6.500M2.500 1.200h6M.8 3.500h5.400v4.700H.8zM.8 4h5.400" fill="none" stroke="#5b6f8a" strokeWidth="1.200" /></svg></MdiButton>
        <MdiButton><svg width="8" height="8" viewBox="0 0 8 8"><path d="M1 1l6 6M7 1L1 7" stroke="#5b6f8a" strokeWidth="1.700" /></svg></MdiButton>
        <Space $w={8} />
      </MenuBar>

      <TabStrip>
        <Tab $active><Label w={38} size={11.500} bold color="#000">الرواتب</Label></Tab>
        <Tab $from={27}><Label w={9} size={11.500} bold color="#000" ltr>ن</Label></Tab>
        <Tab $from={56}><Label w={57} size={11.500} bold color="#000">صرف بدل ا</Label></Tab>
        <Tab><Label w={88} size={11.500} bold color="#000">الصفحة الرئيسية</Label></Tab>
      </TabStrip>

      <Workspace>
        <Form>
          <FormHeader>
            <FormTitle><Label w={56} size={18} bold>الرواتب</Label></FormTitle>
          </FormHeader>
          <FormBody>
            <Panel $h={93}>
              <FieldRow $pt={12}>
                <Field $w={110}>
                  <Label w={29} bold color="#808080">معتمد</Label>
                  <Space $w={3} />
                  <ComboArrow><Triangle dir="d" c="#a0a0a0" /></ComboArrow>
                </Field>
                <Space $w={28} />
                <Label w={25}>الحالة</Label>
                <Space $w={190} />
                <Field $w={99}><Label w={63} bold ltr><Visual>١٩-٠٨-١٤٣٠</Visual></Label></Field>
                <Space $w={3} />
                <Field $w={103}><Label w={63} bold ltr><Visual>١٠-٠٨-٢٠٠٩</Visual></Label></Field>
                <Space $w={9} />
                <Label w={31}>التاريخ</Label>
                <Space $w={121} />
                <GlButton><LedgerIcon /><Label w={16} bold color={TEAL} ltr font="Inter">GL</Label></GlButton>
                <Space $w={4} />
                <Field $w={90} $pl><Space $w={22} /><Label w={3} bold ltr>-</Label></Field>
              </FieldRow>
              <FieldRow $pt={4}>
                <Space $w={1} />
                <Field $w={860} />
              </FieldRow>
              <FieldRow $pt={4}>
                <Field $w={110}><Label w={37} bold ltr>٢٣٤١٥</Label></Field>
                <Space $w={28} />
                <Label w={25}>القيمة</Label>
                <Space $w={582} />
                <Field $w={110} $pl>
                  <ComboArrow><Triangle dir="d" c="#a0a0a0" /></ComboArrow>
                  <Space $w={12} />
                  <Label w={25} bold color="#808080" ltr>٢٠٠٩</Label>
                </Field>
              </FieldRow>
            </Panel>

            <Panel $h={408}>
              <ListBox>
                <VScroll>
                  <ScrollEnd><Triangle dir="u" c="#404040" /></ScrollEnd>
                  <VThumb>
                    <svg width="7" height="8" viewBox="0 0 7 8"><path d="M0 .5h7M0 3.500h7M0 6.500h7" stroke="#606060" /></svg>
                  </VThumb>
                  <Filler />
                  <ScrollEnd><Triangle dir="d" c="#404040" /></ScrollEnd>
                  <ScrollEnd />
                </VScroll>
                <GridSide>
                  <GridArea>
                    <HeadRow>
                      {heads.map(([t, w]) => (
                        <HeadCell key={t}><Label w={w} bold>{t}</Label></HeadCell>
                      ))}
                      <HeadCell />
                      <HeadCell />
                      <HeadCell />
                    </HeadRow>
                    {rows.map((r, i) => (
                      <DataRow key={i} $alt={i % 2 === 1}>
                        <Cell />
                        <NumCell v={r.transport} />
                        <NumCell v={r.housing} />
                        <NumCell v={r.basic} />
                        <NumCell v={r.ins} />
                        <Cell $pr={3}><Label w={r.job[1]}>{r.job[0]}</Label></Cell>
                        <Cell><Label w={109}><Isolate>IAC/M09/٠٨</Isolate> مشروع الد</Label></Cell>
                        <Cell $pr={3}><Label w={85}>فرع الرياض- تامبين</Label></Cell>
                        <Cell $pr={r.name[2]}><Label w={r.name[1]}>{r.name[0]}</Label></Cell>
                        <Cell>{r.id && <Label w={30} bold ltr>{r.id}</Label>}</Cell>
                        <Selector />
                      </DataRow>
                    ))}
                  </GridArea>
                  <HScroll>
                    <ScrollEnd><Triangle dir="l" c="#303030" /></ScrollEnd>
                    <HThumb />
                    <ScrollEnd><Triangle dir="r" c="#303030" s={7} /></ScrollEnd>
                  </HScroll>
                </GridSide>
              </ListBox>
              <GreenStrip><Label w={110} bold color="#ff0000">التحميل على المواقع</Label></GreenStrip>
              <RemarksRow>
                <Field $w={854} />
                <Space $w={32} />
                <Label w={38}>ملاحظات</Label>
              </RemarksRow>
              <ActionRow>
                <RaisedButton><Label w={111} bold>التحميل على المواقع</Label></RaisedButton>
                <RaisedButton><Label w={84} bold color="#a0a0a0" emboss>تحميل الموظفين</Label></RaisedButton>
              </ActionRow>
            </Panel>
          </FormBody>

          <Footer>
            <ToolButton $w={62} $h={54} $column>
              <Label w={42} size={12.500} bold color={TEAL} ltr font="Inter">English</Label>
              <TextEntry><Label w={11} size={10} bold ltr font="Inter">ab</Label><Caret /></TextEntry>
            </ToolButton>
            <ToolMid>
              <ToolLine>
                <ToolButton $w={70} $h={34} $gap={1}>
                  <MagnifierIcon />
                  <TwoLines>
                    <Label w={26} size={11.500} bold color={TEAL} ltr font="Inter">New</Label>
                    <Label w={40} size={11.500} bold color={TEAL} ltr font="Inter">Search</Label>
                  </TwoLines>
                </ToolButton>
                <ToolButton $w={70} $h={34}><Label w={59} bold color={TEAL}>فك الترحيل</Label></ToolButton>
                {tools.map((t) => (
                  <ToolButton key={t.text} $w={70} $h={34} $focus={t.focus} $gap={t.gap}>
                    {t.icon}
                    <Label w={t.w} bold color={t.off ? "#a0a0a0" : TEAL} emboss={t.off}>{t.text}</Label>
                  </ToolButton>
                ))}
              </ToolLine>
              <ToolLine>
                <ToolButton $w={35} $h={21}><Double dir="r" /></ToolButton>
                <ToolButton $w={36} $h={21}><Triangle dir="r" s={9} /></ToolButton>
                <RecordBox><Label w={122} size={12.500} bold color="#696969" ltr font="'Liberation Sans'">Record no. 1 of 2663</Label></RecordBox>
                <ToolButton $w={35} $h={21}><Triangle dir="l" s={9} /></ToolButton>
                <ToolButton $w={36} $h={21}><Double dir="l" /></ToolButton>
              </ToolLine>
            </ToolMid>
            <ToolButton $w={62} $h={54} $column>
              <Label w={28} bold color={TEAL}>اغلاق</Label>
              <StopIcon />
            </ToolButton>
          </Footer>
        </Form>
      </Workspace>

      <Taskbar>
        <ShowDesktop />
        <Clock>
          <Label w={43} size={11.500} color="#fff">١٠:٣٨ ص</Label>
          <Label w={45} size={11.500} color="#fff" ltr><Visual>١٨/٠٤/١٧</Visual></Label>
        </Clock>
        <Tray>
          {trayIcons.map((icon, i) => <TrayGlyph key={i}>{icon}</TrayGlyph>)}
          <VBadge><Label w={12} color="#2b95d6" ltr font="'Liberation Sans'">V2</Label></VBadge>
        </Tray>
        <LanguageTag><Label w={15} color="#fff" ltr font="'Open Sans'">AR</Label></LanguageTag>
        <TaskCell $w={58} $frame $lit $mr={4}>
          <BigBrand>
            <BrandWord><Label w={28} size={10} bold color="#ffff00">ميكروتيك</Label></BrandWord>
            <BrandWord $lines><Label w={28} size={8.500} bold color="#ffff00" ltr>MICRO</Label></BrandWord>
            <BrandWord><Label w={28} size={10} bold color="#ffff00" ltr>T E C</Label></BrandWord>
          </BigBrand>
        </TaskCell>
        <TaskCell $w={58} $frame $mr={3}><Paint /></TaskCell>
        <StackEdge />
        <StackEdge />
        <TaskCell $w={51} $frame $mr={2}><Outlook /></TaskCell>
        <TaskCell $w={62}><Safari /></TaskCell>
        <TaskCell $w={62} $mr={1}><Firefox /></TaskCell>
        <TaskCell $w={59} $frame $mr={2}><Explorer /></TaskCell>
        <TaskCell $w={62}><Chrome /></TaskCell>
        <TaskCell $w={62}><Ie /></TaskCell>
        <TaskCell $w={61}><Wmp /></TaskCell>
        <TaskCell $w={64}><Office c="#2a569a" kind="w" /></TaskCell>
        <TaskCell $w={61} $mr={1}><Office c="#d24625" kind="p" /></TaskCell>
        <TaskCell $w={59} $frame $mr={4}><Office c="#2f8f3e" kind="x" /></TaskCell>
        <TaskCell $w={56}><Start /></TaskCell>
      </Taskbar>

      <Dropdown>
        {dropItems.map(([t, w]) => (
          <DropItem key={t}><Label w={w} color="#000">{t}</Label></DropItem>
        ))}
      </Dropdown>
    </Screen>
  );
}
